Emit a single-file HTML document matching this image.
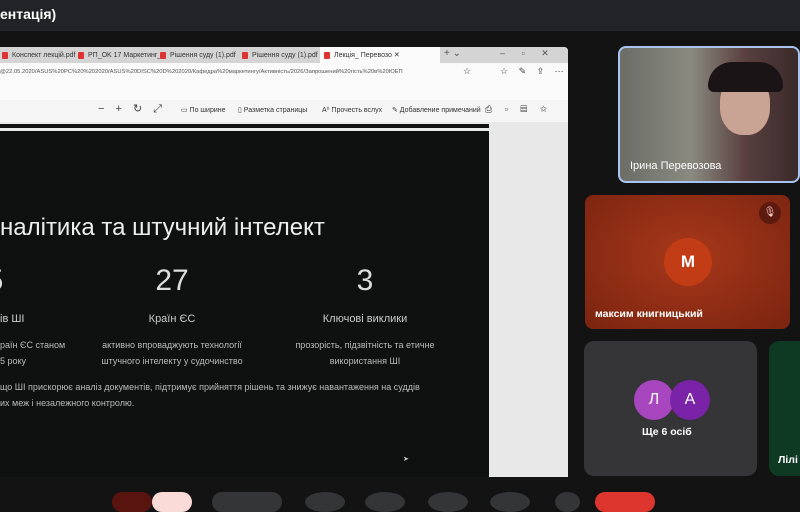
<!DOCTYPE html>
<html><head><meta charset="utf-8"><style>
*{margin:0;padding:0;box-sizing:border-box}
body{width:800px;height:500px;background:#131314;position:relative;overflow:hidden;font-family:"Liberation Sans",sans-serif;color:#fff}
.a{position:absolute}
.tab{position:absolute;top:49px;height:13px;font-size:7px;color:#333;line-height:13px;padding-left:12px}
.tab:before{content:"";position:absolute;left:2px;top:3px;width:6px;height:7px;background:#d33;border-radius:1px}
.tb{position:absolute;top:106px;font-size:7px;color:#333}
.c{text-align:center;position:absolute}
</style></head><body>
<div class="a" style="left:0;top:0;width:800px;height:31px;background:#222326"></div>
<div class="a" style="left:0;top:6px;font-size:14px;font-weight:bold;color:#fff">ентація)</div>
<!-- browser -->
<div class="a" style="left:0;top:47px;width:568px;height:430px;background:#e8e8e8;border-radius:0 4px 0 0"></div>
<div class="a" style="left:0;top:47px;width:568px;height:16px;background:#d4d4d4;border-radius:0 4px 0 0"></div>
<div class="a" style="left:320px;top:47px;width:120px;height:16px;background:#fafafa"></div>
<div class="tab" style="left:0">Конспект лекцій.pdf</div>
<div class="tab" style="left:76px">PП_OK 17 Маркетинг_</div>
<div class="tab" style="left:158px">Рішення суду (1).pdf</div>
<div class="tab" style="left:240px">Рішення суду (1).pdf</div>
<div class="tab" style="left:322px">Лекція_ Перевозо ✕</div>
<div class="a" style="left:444px;top:48px;font-size:10px;color:#555">+ ⌄</div>
<div class="a" style="left:500px;top:48px;font-size:9px;color:#555;word-spacing:14px">– ▫ ✕</div>
<div class="a" style="left:0;top:63px;width:568px;height:22px;background:#fafafa"></div>
<div class="a" style="left:0;top:69px;font-size:5.8px;color:#555;white-space:nowrap">@22.05.2020/ASUS%20PC%20%202020/ASUS%20DISC%20D%202020/Кафедра%20маркетингу/Активність/2026/Запрошений%20гість%20в%20ЮЕП</div>
<div class="a" style="left:463px;top:66px;font-size:9px;color:#444">☆</div>
<div class="a" style="left:500px;top:66px;font-size:9px;color:#444;word-spacing:8px">☆ ✎ ⇪ ⋯</div>
<div class="a" style="left:0;top:85px;width:568px;height:15px;background:#fafafa"></div>
<div class="a" style="left:0;top:100px;width:568px;height:22px;background:#f5f5f5"></div>
<div class="tb" style="left:98px;top:102px;font-size:11px;color:#444;word-spacing:8px">− + ↻ ⤢</div>
<div class="tb" style="left:181px">▭ По ширине</div>
<div class="tb" style="left:238px">▯ Разметка страницы</div>
<div class="tb" style="left:322px">A⁰ Прочесть вслух</div>
<div class="tb" style="left:392px">✎ Добавление примечаний</div>
<div class="tb" style="left:485px;font-size:9px;top:104px;word-spacing:10px">⎙ ▫ ▤ ✩</div>
<div class="a" style="left:0;top:124px;width:489px;height:4px;background:#111"></div>
<div class="a" style="left:0;top:131px;width:489px;height:346px;background:#0f1010"></div>
<div class="a" style="left:0;top:214px;font-size:24px;color:#eee;white-space:nowrap">налітика та штучний інтелект</div>
<div class="c" style="left:-20px;width:30px;top:264px;font-size:30px;color:#ddd">5</div>
<div class="c" style="left:122px;width:100px;top:264px;font-size:30px;color:#ddd">27</div>
<div class="c" style="left:315px;width:100px;top:264px;font-size:30px;color:#ddd">3</div>
<div class="a" style="left:0;top:313px;font-size:11px;color:#ccc">ів ШІ</div>
<div class="c" style="left:112px;width:120px;top:313px;font-size:11px;color:#ccc">Країн ЄС</div>
<div class="c" style="left:290px;width:150px;top:313px;font-size:11px;color:#ccc">Ключові виклики</div>
<div class="a" style="left:0;top:337px;font-size:9px;color:#bbb;line-height:16px">раїн ЄС станом<br>5 року</div>
<div class="c" style="left:82px;width:180px;top:337px;font-size:9px;color:#bbb;line-height:16px">активно впроваджують технології<br>штучного інтелекту у судочинство</div>
<div class="c" style="left:275px;width:180px;top:337px;font-size:9px;color:#bbb;line-height:16px">прозорість, підзвітність та етичне<br>використання ШІ</div>
<div class="a" style="left:0;top:379px;font-size:9px;color:#bbb;line-height:16px;white-space:nowrap">що ШІ прискорює аналіз документів, підтримує прийняття рішень та знижує навантаження на суддів<br>их меж і незалежного контролю.</div>
<div class="a" style="left:403px;top:455px;font-size:7px;color:#ccc">➤</div>
<!-- right -->
<div class="a" style="left:618px;top:46px;width:182px;height:137px;background:linear-gradient(90deg,#6b6d66,#8a8a80 40%,#5a4040 70%,#3a2a2a);border:2px solid #a8c4f0;border-radius:8px"></div>
<div class="a" style="left:720px;top:75px;width:50px;height:60px;background:#c9a394;border-radius:45%"></div>
<div class="a" style="left:708px;top:62px;width:75px;height:30px;background:#1a1416;border-radius:40px 40px 10px 10px"></div>
<div class="a" style="left:630px;top:160px;font-size:11px;color:#fff">Ірина Перевозова</div>
<div class="a" style="left:585px;top:195px;width:205px;height:134px;background:radial-gradient(ellipse at 50% 45%,#a8381a,#7a2410);border-radius:8px"></div>
<div class="a" style="left:759px;top:202px;width:22px;height:22px;border-radius:50%;background:#5c1a10;font-size:10px;text-align:center;line-height:22px;color:#fcc">🎙</div>
<div class="a" style="left:664px;top:238px;width:48px;height:48px;border-radius:50%;background:#c23c16;font-size:17px;font-weight:bold;text-align:center;line-height:48px">M</div>
<div class="a" style="left:595px;top:308px;font-size:10.5px;font-weight:bold">максим книгницький</div>
<div class="a" style="left:584px;top:341px;width:173px;height:135px;background:#353538;border-radius:10px"></div>
<div class="a" style="left:634px;top:380px;width:40px;height:40px;border-radius:50%;background:#a846c0;font-size:16px;text-align:center;line-height:40px">Л</div>
<div class="a" style="left:670px;top:380px;width:40px;height:40px;border-radius:50%;background:#7a22a8;font-size:16px;text-align:center;line-height:40px">A</div>
<div class="a" style="left:642px;top:426px;font-size:10.5px;font-weight:bold">Ще 6 осіб</div>
<div class="a" style="left:769px;top:341px;width:40px;height:135px;background:#0e3a24;border-radius:10px"></div>
<div class="a" style="left:778px;top:454px;font-size:10.5px;font-weight:bold">Лілі</div>
<!-- bottom buttons -->
<div class="a" style="left:112px;top:492px;width:40px;height:20px;background:#5a1410;border-radius:10px"></div>
<div class="a" style="left:152px;top:492px;width:40px;height:20px;background:#fadbd8;border-radius:10px"></div>
<div class="a" style="left:212px;top:492px;width:70px;height:20px;background:#333537;border-radius:10px"></div>
<div class="a" style="left:305px;top:492px;width:40px;height:20px;background:#333537;border-radius:50%"></div>
<div class="a" style="left:365px;top:492px;width:40px;height:20px;background:#333537;border-radius:50%"></div>
<div class="a" style="left:428px;top:492px;width:40px;height:20px;background:#333537;border-radius:50%"></div>
<div class="a" style="left:490px;top:492px;width:40px;height:20px;background:#333537;border-radius:50%"></div>
<div class="a" style="left:555px;top:492px;width:25px;height:20px;background:#333537;border-radius:50%"></div>
<div class="a" style="left:595px;top:492px;width:60px;height:20px;background:#dc362e;border-radius:10px"></div>
</body></html>
